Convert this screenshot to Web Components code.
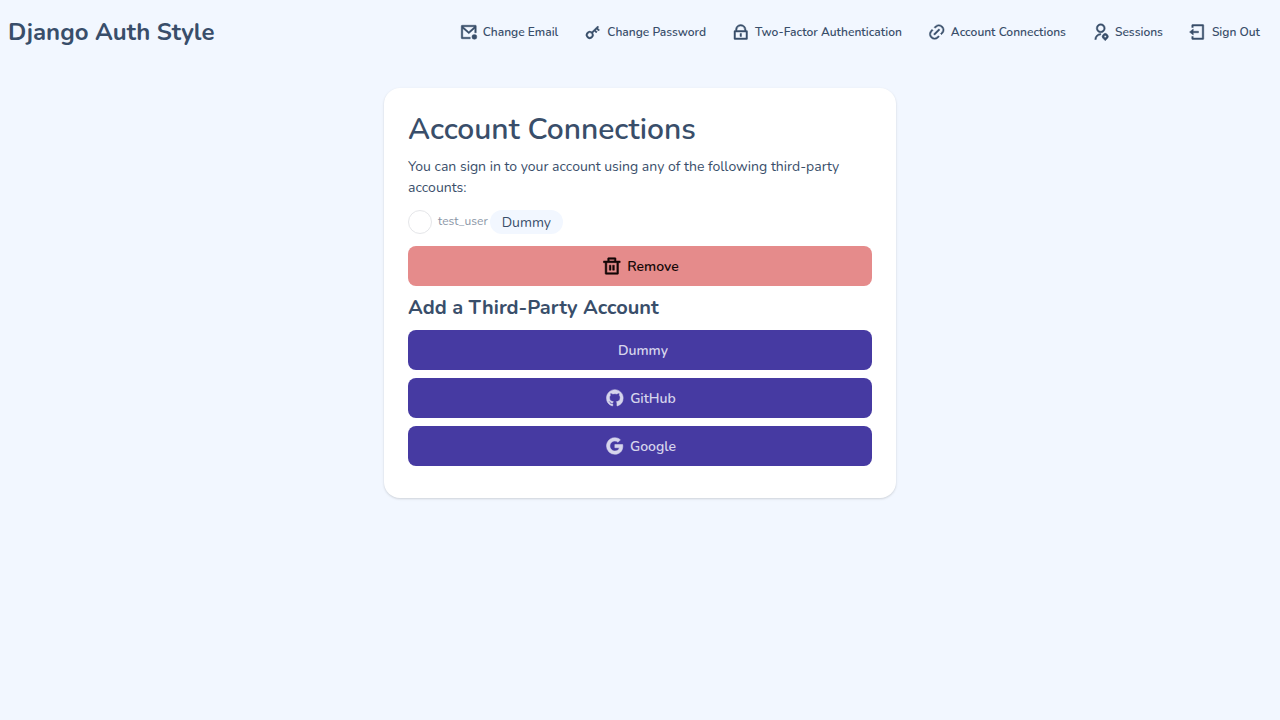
<!DOCTYPE html>
<html lang="en">
<head>
<meta charset="utf-8">
<meta name="viewport" content="width=device-width, initial-scale=1">
<title>Account Connections</title>
<style>
  :root {
    --page: #f2f7ff;
    --surface: #ffffff;
    --ink: #394e6a;
    --secondary: #463aa2;
    --secondary-ink: #d6d5ec;
    --error: #e58b8b;
    --error-ink: #130707;
  }
  body {
    margin: 0;
    min-height: 100vh;
    background: var(--page);
    color: var(--ink);
    font: 400 14px/21px Nunito, Lato, sans-serif;
  }
</style>
</head>
<body>
<app-header brand="Django Auth Style">
  <nav-link icon="mail" href="#email">Change Email</nav-link>
  <nav-link icon="key" href="#password">Change Password</nav-link>
  <nav-link icon="lock" href="#mfa">Two-Factor Authentication</nav-link>
  <nav-link icon="link" href="#connections">Account Connections</nav-link>
  <nav-link icon="user" href="#sessions">Sessions</nav-link>
  <nav-link icon="logout" href="#logout">Sign Out</nav-link>
</app-header>
<panel-card heading="Account Connections">
  <span slot="intro">You can sign in to your account using any of the following third-party accounts:</span>
  <account-option slot="accounts" name="account" value="1" provider="Dummy">test_user</account-option>
  <action-button slot="accounts" variant="error" icon="trash">Remove</action-button>
  <span slot="subheading">Add a Third-Party Account</span>
  <action-button>Dummy</action-button>
  <action-button icon="github">GitHub</action-button>
  <action-button icon="google">Google</action-button>
</panel-card>

<script>
const ICONS = {
  mail: '<path d="M20 7.238l-7.928 7.100L4 7.216V19h10v2H3a1 1 0 0 1-1-1V4a1 1 0 0 1 1-1h18a1 1 0 0 1 1 1v9h-2V7.238zM19.501 5H4.511l7.550 6.662L19.502 5z"/><circle cx="19.500" cy="18.500" r="3.300"/>',
  key: '<path d="M10.758 11.828l7.849-7.849 1.414 1.414-1.414 1.415 2.474 2.474-1.414 1.415-2.475-2.475-1.414 1.414 2.121 2.121-1.414 1.415-2.121-2.122-2.192 2.192a5.002 5.002 0 0 1-7.708 6.294 5 5 0 0 1 6.294-7.708zm-.637 6.293A3 3 0 1 0 5.880 13.880a3 3 0 0 0 4.242 4.242z"/>',
  lock: '<path d="M19 10h1a1 1 0 0 1 1 1v10a1 1 0 0 1-1 1H4a1 1 0 0 1-1-1V11a1 1 0 0 1 1-1h1V9a7 7 0 1 1 14 0v1zM5 12v8h14v-8H5zm6 2h2v4h-2v-4zm6-4V9A5 5 0 0 0 7 9v1h10z"/>',
  link: '<path d="M18.364 15.536 16.950 14.121l1.414-1.414a5 5 0 1 0-7.071-7.071L9.879 7.050 8.464 5.636 9.879 4.221a7 7 0 0 1 9.900 9.900zm-2.828 2.828-1.415 1.414a7 7 0 0 1-9.900-9.900l1.415-1.414L7.050 9.879l-1.414 1.414a5 5 0 1 0 7.071 7.071l1.414-1.414zm-.708-10.607 1.415 1.415-7.071 7.070-1.415-1.414z"/>',
  user: '<path d="M12 14v2a6 6 0 0 0-6 6H4a8 8 0 0 1 8-8zm0-1c-3.315 0-6-2.685-6-6s2.685-6 6-6 6 2.685 6 6-2.685 6-6 6zm0-2c2.210 0 4-1.790 4-4s-1.790-4-4-4-4 1.790-4 4 1.790 4 4 4z"/><path fill-rule="evenodd" d="M20.828 20.828 18 23.657l-2.828-2.829a4 4 0 1 1 5.656 0zM18 16.500a1.500 1.500 0 1 0 0 3 1.500 1.500 0 0 0 0-3z"/>',
  logout: '<path d="M4 18h2v2h12V4H6v2H4V3a1 1 0 0 1 1-1h14a1 1 0 0 1 1 1v18a1 1 0 0 1-1 1H5a1 1 0 0 1-1-1v-3zm2-7h7v2H6v3l-5-4 5-4v3z"/>',
  trash: '<path d="M7 6V3a1 1 0 0 1 1-1h8a1 1 0 0 1 1 1v3h5v2h-2v13a1 1 0 0 1-1 1H5a1 1 0 0 1-1-1V8H2V6h5zm11 2H6v12h12V8zM9 11h2v6H9v-6zm4 0h2v6h-2v-6zM9 4v2h6V4H9z"/>',
  github: '<path d="M12 2C6.475 2 2 6.475 2 12a9.994 9.994 0 0 0 6.838 9.488c.5.087.687-.213.687-.476 0-.237-.013-1.024-.013-1.862-2.512.463-3.162-.612-3.362-1.175-.113-.288-.6-1.175-1.025-1.413-.35-.187-.85-.65-.013-.662.788-.013 1.350.725 1.538 1.025.9 1.512 2.338 1.087 2.912.825.088-.65.350-1.087.638-1.337-2.225-.25-4.550-1.113-4.550-4.938 0-1.088.387-1.987 1.025-2.688-.1-.25-.45-1.275.1-2.650 0 0 .837-.262 2.750 1.026a9.280 9.280 0 0 1 2.500-.338c.85 0 1.700.112 2.500.337 1.912-1.300 2.750-1.024 2.750-1.024.55 1.375.2 2.400.1 2.650.637.7 1.025 1.587 1.025 2.687 0 3.838-2.337 4.688-4.562 4.938.362.312.675.912.675 1.850 0 1.337-.013 2.412-.013 2.750 0 .262.188.574.688.474A10.016 10.016 0 0 0 22 12c0-5.525-4.475-10-10-10z"/>',
  google: '<path d="M3.064 7.510A9.996 9.996 0 0 1 12 2c2.695 0 4.959.991 6.690 2.605l-2.867 2.868C14.786 6.482 13.468 5.977 12 5.977c-2.605 0-4.810 1.760-5.595 4.123-.2.6-.314 1.240-.314 1.900s.114 1.300.314 1.900c.786 2.364 2.990 4.123 5.595 4.123 1.345 0 2.490-.355 3.386-.955a4.600 4.600 0 0 0 1.996-3.018H12v-3.868h9.418c.118.654.182 1.336.182 2.045 0 3.046-1.090 5.610-2.982 7.350C16.964 21.105 14.700 22 12 22A9.996 9.996 0 0 1 2 12c0-1.614.386-3.140 1.064-4.490z"/>'
};

const icon = name =>
  `<i>${ICONS[name] ? `<svg viewBox="-1 0 24 24" aria-hidden="true">${ICONS[name]}</svg>` : ''}</i>`;

const ICON_STYLE = `
  i { display: flex; flex: none; }
  svg { width: var(--icon); height: var(--icon); overflow: visible; fill: currentColor; stroke: currentColor; stroke-width: .6; }`;

class Base extends HTMLElement {
  connectedCallback() {
    if (this.shadowRoot) return;
    this.attachShadow({ mode: 'open' }).innerHTML = this.template();
  }
  attr(name) { return this.getAttribute(name) || ''; }
}

customElements.define('app-header', class extends Base {
  template() {
    return `
      <style>
        :host { display: block; }
        header { display: flex; flex-wrap: wrap; align-items: center; justify-content: space-between; min-height: 64px; padding: 0 20px 0 8px; box-sizing: border-box; }
        .brand { font-size: 24px; line-height: 32px; font-weight: 700; color: inherit; text-decoration: none; }
        nav { display: flex; flex-wrap: wrap; gap: 8px 25px; }
      </style>
      <header>
        <a class="brand" href="#home">${this.attr('brand')}</a>
        <nav aria-label="Account"><slot></slot></nav>
      </header>`;
  }
});

customElements.define('nav-link', class extends Base {
  template() {
    return `
      <style>
        :host { display: block; --icon: 18px; }
        a { display: flex; align-items: center; gap: 6px; color: inherit; text-decoration: none; font-size: 12px; line-height: 24px; font-weight: 600; white-space: nowrap; }
        ${ICON_STYLE}
      </style>
      <a href="${this.attr('href')}">${icon(this.attr('icon'))}<span><slot></slot></span></a>`;
  }
});

customElements.define('panel-card', class extends Base {
  template() {
    return `
      <style>
        :host { display: block; padding: 24px 16px; }
        main { max-width: 512px; margin: 0 auto; padding: 24px 24px 32px; box-sizing: border-box; background: var(--surface); border-radius: 16px; box-shadow: 0 1px 3px rgb(0 0 0 / 10%), 0 1px 2px rgb(0 0 0 / 6%); display: flex; flex-direction: column; gap: 8px; }
        h1, h2, p { margin: 0; }
        h1 { font-size: 30px; line-height: 36px; font-weight: 600; }
        h2 { font-size: 20px; line-height: 28px; font-weight: 700; }
        form, .providers { display: flex; flex-direction: column; gap: 8px; }
      </style>
      <main>
        <h1>${this.attr('heading')}</h1>
        <p><slot name="intro"></slot></p>
        <form><slot name="accounts"></slot></form>
        <h2><slot name="subheading"></slot></h2>
        <div class="providers"><slot></slot></div>
      </main>`;
  }
});

customElements.define('account-option', class extends Base {
  template() {
    return `
      <style>
        :host { display: block; }
        label { display: flex; align-items: center; min-height: 32px; cursor: pointer; }
        input { appearance: none; width: 24px; height: 24px; margin: 0 6px 0 0; border: 1px solid #e5e6e9; border-radius: 50%; background: var(--surface); flex: none; }
        input:checked { background: var(--ink); box-shadow: inset 0 0 0 4px var(--surface); }
        .name { font-size: 12px; line-height: 16px; opacity: .6; margin-right: 2px; padding-bottom: 2px; }
        .badge { padding: 3px 12px 1px; line-height: 20px; font-size: 14px; border-radius: 12px; background: var(--page); }
      </style>
      <label>
        <input type="radio" name="${this.attr('name')}" value="${this.attr('value')}">
        <span class="name"><slot></slot></span>
        <span class="badge">${this.attr('provider')}</span>
      </label>`;
  }
});

customElements.define('action-button', class extends Base {
  template() {
    return `
      <style>
        :host { display: block; --icon: 20px; --fill: var(--secondary); --on-fill: var(--secondary-ink); }
        :host([variant="error"]) { --fill: var(--error); --on-fill: var(--error-ink); }
        button { display: flex; align-items: center; justify-content: center; gap: 6px; width: 100%; height: 40px; padding: 0 16px; border: 0; border-radius: 8px; background: var(--fill); color: var(--on-fill); font: inherit; font-weight: 600; cursor: pointer; }
        ${ICON_STYLE}
      </style>
      <button type="button">${icon(this.attr('icon'))}<span><slot></slot></span></button>`;
  }
});
</script>
</body>
</html>
